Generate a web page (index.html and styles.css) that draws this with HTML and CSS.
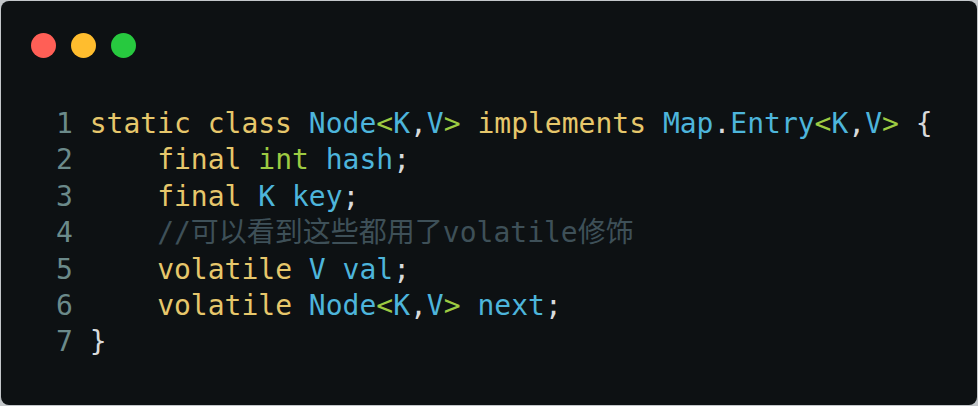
FILE: index.html
```html
<!DOCTYPE html>
<html>
<head>
<meta charset="utf-8">
<link rel="stylesheet" href="styles.css">
</head>
<body>
<div class="window">
  <div class="titlebar">
    <span class="dot red"></span>
    <span class="dot yellow"></span>
    <span class="dot green"></span>
  </div>
  <div class="code">
    <div class="line"><span class="ln">1</span><span class="kw">static class </span><span class="ty">Node</span><span class="op">&lt;</span><span class="ty">K</span><span class="pn">,</span><span class="ty">V</span><span class="op">&gt;</span><span class="kw"> implements </span><span class="ty">Map</span><span class="pn">.</span><span class="ty">Entry</span><span class="op">&lt;</span><span class="ty">K</span><span class="pn">,</span><span class="ty">V</span><span class="op">&gt;</span><span class="pn"> {</span></div>
    <div class="line"><span class="ln">2</span><span class="pn">    </span><span class="kw">final </span><span class="op">int </span><span class="ty">hash</span><span class="pn">;</span></div>
    <div class="line"><span class="ln">3</span><span class="pn">    </span><span class="kw">final </span><span class="ty">K key</span><span class="pn">;</span></div>
    <div class="line"><span class="ln">4</span><span class="pn">    </span><span class="cm">//可以看到这些都用了volatile修饰</span></div>
    <div class="line"><span class="ln">5</span><span class="pn">    </span><span class="kw">volatile </span><span class="ty">V val</span><span class="pn">;</span></div>
    <div class="line"><span class="ln">6</span><span class="pn">    </span><span class="kw">volatile </span><span class="ty">Node</span><span class="op">&lt;</span><span class="ty">K</span><span class="pn">,</span><span class="ty">V</span><span class="op">&gt;</span><span class="ty"> next</span><span class="pn">;</span></div>
    <div class="line"><span class="ln">7</span><span class="pn">}</span></div>
  </div>
</div>
</body>
</html>
```
FILE: styles.css
```css
html, body {
  margin: 0;
  padding: 0;
}
body {
  background: #c3c7ca;
  width: 978px;
  height: 406px;
  padding: 1px;
  box-sizing: border-box;
}
.window {
  width: 976px;
  height: 404px;
  background: #0d1113;
  border-radius: 8px;
  box-sizing: border-box;
  padding: 32px 0 0 30px;
}
.titlebar {
  display: flex;
  gap: 15px;
  height: 25px;
}
.dot {
  width: 25px;
  height: 25px;
  border-radius: 50%;
  display: block;
}
.red { background: #ff5f56; }
.yellow { background: #ffbd2e; }
.green { background: #27c93f; }
.code {
  margin-top: 48px;
  margin-left: 25px;
  font-family: "DejaVu Sans Mono", monospace;
  font-size: 28px;
  line-height: 36.4px;
  color: #d8dadb;
}
.line {
  display: block;
  white-space: pre;
}
.ln {
  color: #6b8a8a;
  display: inline-block;
  width: 33.7px;
}
.kw { color: #e6c76b; }
.ty { color: #4db5db; }
.op { color: #9dcb42; }
.pn { color: #d8dadb; }
.cm { color: #3e5058; font-family: "DejaVu Sans Mono", "Noto Sans CJK SC", monospace; }
```
